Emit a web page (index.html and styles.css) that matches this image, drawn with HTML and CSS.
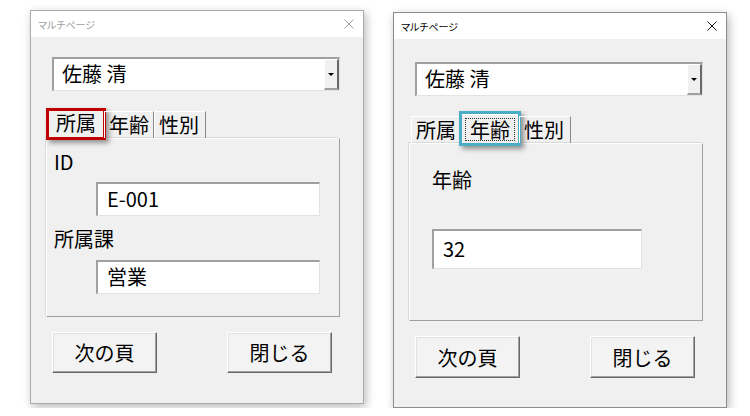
FILE: index.html
```html
<!DOCTYPE html>
<html lang="ja">
  <head>
    <meta charset="UTF-8" />
    <meta name="viewport" content="width=device-width, initial-scale=1.0" />
    <title>マルチページ</title>
    <link rel="stylesheet" href="styles.css">
  </head>
  <body>
    <main class="desktop">
      <!-- left: page 1 (所属) -->
      <section class="window">
        <header class="titlebar">
          <span class="title">マルチページ</span>
          <svg class="close" viewBox="0 0 10 10"><path d="M0.5 0.5 L9.5 9.5 M9.5 0.5 L0.5 9.5" /></svg>
        </header>
        <div class="form-body">
          <div class="combo">
            <span class="combo-text">佐藤 清</span>
            <span class="combo-btn"><i class="arrow"></i></span>
          </div>
          <nav class="tabs">
            <span class="tab selected mark-red">所属</span>
            <span class="tab">年齢</span>
            <span class="tab">性別</span>
          </nav>
          <div class="page page-dept">
            <label class="field-label">ID</label>
            <div class="textbox tb-wide">E-001</div>
            <label class="field-label label-gap">所属課</label>
            <div class="textbox tb-wide tb-gap">営業</div>
          </div>
          <div class="buttons">
            <button class="btn">次の頁</button>
            <button class="btn">閉じる</button>
          </div>
        </div>
      </section>

      <!-- right: page 2 (年齢) -->
      <section class="window active">
        <header class="titlebar">
          <span class="title">マルチページ</span>
          <svg class="close" viewBox="0 0 10 10"><path d="M0.5 0.5 L9.5 9.5 M9.5 0.5 L0.5 9.5" /></svg>
        </header>
        <div class="form-body">
          <div class="combo">
            <span class="combo-text">佐藤 清</span>
            <span class="combo-btn"><i class="arrow"></i></span>
          </div>
          <nav class="tabs">
            <span class="tab">所属</span>
            <span class="tab selected focused mark-blue"><span class="focus">年齢</span></span>
            <span class="tab">性別</span>
          </nav>
          <div class="page page-age">
            <label class="field-label">年齢</label>
            <div class="textbox tb-age">32</div>
          </div>
          <div class="buttons">
            <button class="btn">次の頁</button>
            <button class="btn">閉じる</button>
          </div>
        </div>
      </section>
    </main>
  </body>
</html>
```

FILE: styles.css
```css
body {
  margin: 0;
  background: #fff;
  font-family: "Noto Sans CJK JP", "Noto Sans", sans-serif;
  color: #000;
}

.desktop {
  display: flex;
  align-items: flex-start;
  gap: 29px;
  padding: 10px 0 0 30px;
}

.window {
  width: 334px;
  height: 394px;
  box-sizing: border-box;
  background: #f0f0f0;
  border: 1px solid #ababab;
  box-shadow: 2px 3px 9px rgba(0, 0, 0, 0.28);
}

.window.active {
  height: 396px;
  margin-top: 2px;
  border-color: #8c8c8c;
}

.titlebar {
  height: 26px;
  background: #fff;
  display: flex;
  align-items: center;
  justify-content: space-between;
  padding: 0 9px 0 7px;
}

.title {
  font-size: 10px;
  color: #a0a0a0;
  font-feature-settings: "palt";
}

.active .title {
  color: #000;
}

.close {
  width: 10px;
  height: 10px;
  fill: none;
  stroke: #9d9d9d;
  stroke-width: 1;
}

.active .close {
  stroke: #1a1a1a;
}

.form-body {
  padding: 20px 23px 0 15px;
}

.active .form-body {
  padding-top: 23px;
}

/* combobox */
.combo {
  display: flex;
  height: 34px;
  box-sizing: border-box;
  margin: 0 0 16px 6px;
  background: #fff;
  border-style: solid;
  border-width: 2px 1px 1px 2px;
  border-color: #a0a0a0 #e3e3e3 #e3e3e3 #a0a0a0;
}

.combo-text {
  flex: 1;
  font-size: 20px;
  line-height: 30px;
  padding-left: 8px;
}

.combo-btn {
  width: 15px;
  box-sizing: border-box;
  display: flex;
  align-items: center;
  justify-content: center;
  background: #f0f0f0;
  border-style: solid;
  border-width: 1px 2px 2px 1px;
  border-color: #fff #696969 #a0a0a0 #fff;
}

.arrow {
  width: 0;
  height: 0;
  border-left: 3px solid transparent;
  border-right: 3px solid transparent;
  border-top: 3px solid #000;
}

/* tabs */
.tabs {
  display: flex;
  align-items: flex-end;
  height: 31px;
  padding-left: 2px;
  position: relative;
  z-index: 1;
}

.tab {
  position: relative;
  height: 27px;
  box-sizing: border-box;
  padding: 0 4px;
  font-size: 20px;
  line-height: 25px;
  border-style: solid;
  border-width: 1px 1px 0 1px;
  border-color: #fff #8a8a8a transparent #fff;
}

.tab:last-child {
  padding-right: 6px;
}

.tab.selected {
  height: 30px;
  margin-bottom: -1px;
  padding: 0 7px;
  background: #f0f0f0;
}

.tab.focused {
  padding: 0 3px;
}

.focus {
  display: block;
  margin-top: 3px;
  padding: 0 4px;
  line-height: 21px;
  border: 1px dotted #333;
}

.mark-red::after,
.mark-blue::after {
  content: "";
  position: absolute;
  left: -3px;
  right: -3px;
  top: -2px;
  bottom: -1px;
  border: 3px solid #c00000;
  box-shadow: 3px 3px 5px rgba(0, 0, 0, 0.4);
}

.mark-blue::after {
  top: -4px;
  bottom: -2px;
  border-color: #4bacc6;
}

/* page frame */
.page {
  height: 179px;
  box-sizing: border-box;
  border: 1px solid;
  border-color: #fff #a0a0a0 #a0a0a0 #fff;
  box-shadow: -1px -1px 0 #dadada;
}

.page-dept {
  padding: 11px 0 0 7px;
}

.page-age {
  height: 178px;
  padding: 24px 0 0 22px;
}

.field-label {
  display: block;
  font-size: 20px;
  line-height: 24px;
}

.label-gap {
  margin-top: 11px;
}

.textbox {
  box-sizing: border-box;
  height: 34px;
  background: #fff;
  border-style: solid;
  border-width: 2px 1px 1px 2px;
  border-color: #a0a0a0 #e3e3e3 #e3e3e3 #a0a0a0;
  font-size: 20px;
  line-height: 30px;
  padding-left: 9px;
}

.tb-wide {
  width: 224px;
  margin: 8px 0 0 42px;
}

.tb-gap {
  margin-top: 9px;
}

.tb-age {
  width: 210px;
  height: 40px;
  line-height: 36px;
  margin-top: 37px;
}

/* buttons */
.buttons {
  display: flex;
  justify-content: space-between;
  margin: 15px 8px 0 6px;
}

.btn {
  width: 105px;
  height: 41px;
  padding: 0;
  font-family: inherit;
  font-size: 20px;
  color: #000;
  background: #f3f3f3;
  border: 1px solid;
  border-color: #fff #696969 #696969 #fff;
  box-shadow: inset -1px -1px 0 #a0a0a0, inset 1px 1px 0 #e3e3e3;
}

.active .btn {
  height: 42px;
}
```
